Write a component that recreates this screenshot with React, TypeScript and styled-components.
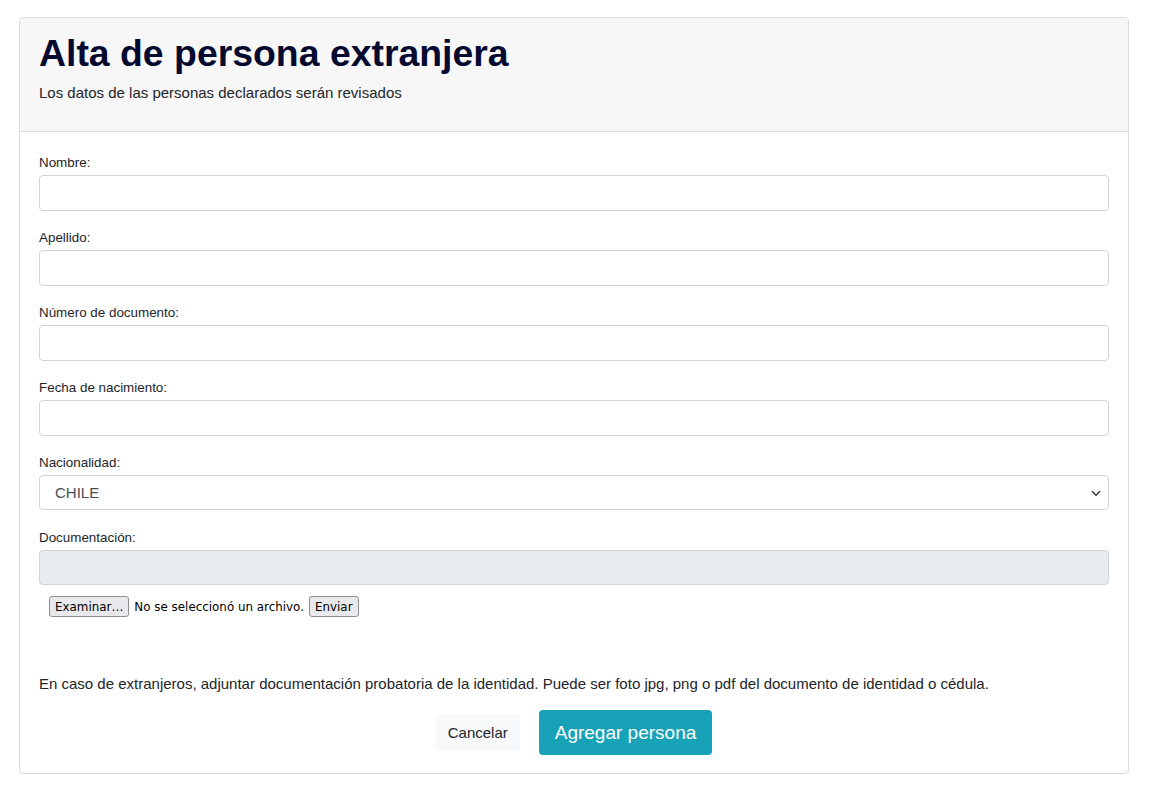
import React from "react";
import styled, { createGlobalStyle } from "styled-components";

const GlobalStyle = createGlobalStyle`
  body {
    margin: 0;
    background: #ffffff;
    font-family: "Liberation Sans", Arial, sans-serif;
    color: #212529;
  }
`;

const Page = styled.div`
  padding: 17px 0 0 19px;
`;

const Card = styled.div`
  width: 1108px;
  border: 1px solid #dcdcdc;
  border-radius: 4px;
  background: #fff;
`;

const CardHeader = styled.div`
  background: #f7f7f7;
  border-bottom: 1px solid #dcdcdc;
  padding: 13px 19px 28px;
  border-radius: 4px 4px 0 0;
`;

const Title = styled.h1`
  margin: 0;
  font-size: 37.4px;
  line-height: 44px;
  font-weight: 700;
  color: #060a30;
`;

const Subtitle = styled.p`
  margin: 8px 0 0;
  font-size: 15px;
  line-height: 20px;
  color: #212529;
`;

const CardBody = styled.div`
  padding: 23px 19px 18px;
`;

const Group = styled.div<{ $gap?: number }>`
  margin-bottom: ${(p) => p.$gap ?? 19}px;
`;

const Label = styled.label`
  display: block;
  font-size: 13.4px;
  line-height: 16px;
  margin-bottom: 4px;
  color: #212529;
`;

const Input = styled.input<{ $h?: number }>`
  display: block;
  box-sizing: border-box;
  width: 100%;
  height: ${(p) => p.$h ?? 36}px;
  border: 1px solid #ced4da;
  border-radius: 4px;
  padding: 6px 12px;
  font-size: 15px;
  background: #fff;
  font-family: inherit;
  &:disabled {
    background: #e9ecef;
  }
`;

const SelectBox = styled.div`
  box-sizing: border-box;
  height: 35px;
  border: 1px solid #ced4da;
  border-radius: 4px;
  padding: 0 6px 0 15px;
  display: flex;
  align-items: center;
  justify-content: space-between;
  font-size: 15px;
  color: #495057;
`;

const FileRow = styled.div`
  display: flex;
  align-items: center;
  gap: 5px;
  padding: 11px 0 0 10px;
  font-family: "DejaVu Sans", sans-serif;
  font-size: 11.9px;
  color: #000;
`;

const NativeButton = styled.button`
  font-family: "DejaVu Sans", sans-serif;
  font-size: 11.9px;
  height: 21px;
  padding: 0 5px;
  border: 1px solid #8f8f8f;
  border-radius: 3px;
  background: #e9e9ed;
  color: #000;
`;

const Help = styled.p`
  margin: 57px 0 0;
  font-size: 15px;
  line-height: 20px;
  color: #212529;
`;

const Actions = styled.div`
  display: flex;
  justify-content: center;
  gap: 19px;
  margin-top: 16px;
`;

const Button = styled.button<{ $primary?: boolean }>`
  font-family: "Liberation Sans", Arial, sans-serif;
  border: none;
  border-radius: 4px;
  cursor: pointer;
  background: ${(p) => (p.$primary ? "#17a2b8" : "#f8f9fa")};
  color: ${(p) => (p.$primary ? "#fff" : "#212529")};
  font-size: ${(p) => (p.$primary ? "19px" : "15px")};
  height: ${(p) => (p.$primary ? "45px" : "37px")};
  padding: ${(p) => (p.$primary ? "0 16px" : "0 12px")};
  align-self: center;
`;

const Chevron = () => (
  <svg width="12" height="12" viewBox="0 0 16 16" fill="none">
    <path d="M3 6l5 5 5-5" stroke="#343a40" strokeWidth="2" strokeLinecap="round" strokeLinejoin="round" />
  </svg>
);

export default function App() {
  const fields = ["Nombre:", "Apellido:", "Número de documento:", "Fecha de nacimiento:"];
  return (
    <>
      <GlobalStyle />
      <Page>
        <Card>
          <CardHeader>
            <Title>Alta de persona extranjera</Title>
            <Subtitle>Los datos de las personas declarados serán revisados</Subtitle>
          </CardHeader>
          <CardBody>
            {fields.map((f) => (
              <Group key={f}>
                <Label>{f}</Label>
                <Input type="text" />
              </Group>
            ))}
            <Group $gap={20}>
              <Label>Nacionalidad:</Label>
              <SelectBox>
                <span>CHILE</span>
                <Chevron />
              </SelectBox>
            </Group>
            <Group $gap={0}>
              <Label>Documentación:</Label>
              <Input type="text" disabled $h={35} />
              <FileRow>
                <NativeButton>Examinar…</NativeButton>
                <span>No se seleccionó un archivo.</span>
                <NativeButton>Enviar</NativeButton>
              </FileRow>
            </Group>
            <Help>
              En caso de extranjeros, adjuntar documentación probatoria de la identidad. Puede ser foto jpg, png o pdf del documento de identidad o cédula.
            </Help>
            <Actions>
              <Button>Cancelar</Button>
              <Button $primary>Agregar persona</Button>
            </Actions>
          </CardBody>
        </Card>
      </Page>
    </>
  );
}
